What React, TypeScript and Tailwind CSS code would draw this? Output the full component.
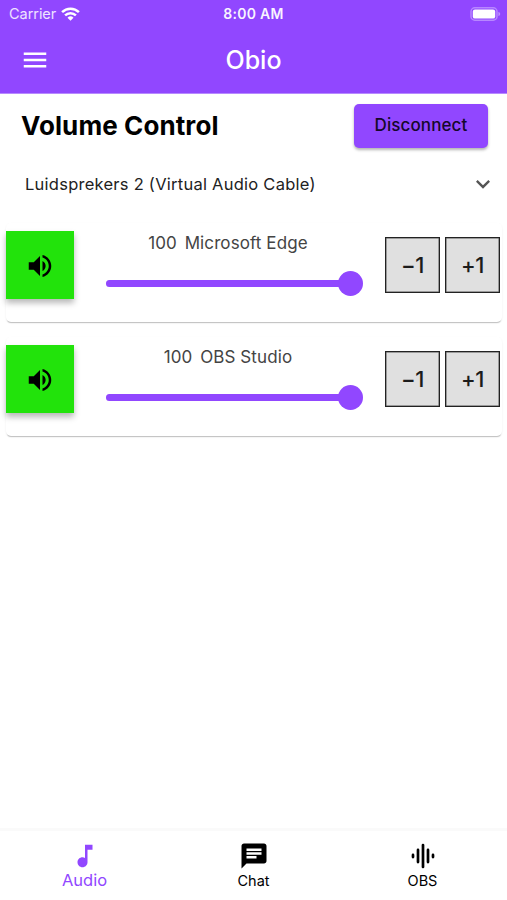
import { useState } from 'react'
import { MdChat, MdExpandMore, MdMenu, MdMusicNote, MdVolumeUp } from 'react-icons/md'

type Channel = {
  id: string
  name: string
  volume: number
}

const initialChannels: Channel[] = [
  { id: 'edge', name: 'Microsoft Edge', volume: 100 },
  { id: 'obs', name: 'OBS Studio', volume: 100 }
]

function StatusBar() {
  return (
    <div className="grid h-[27px] grid-cols-3 items-center pl-[9px] pr-[6px] text-white">
      <div className="flex items-center gap-[5px]">
        <span className="text-[14.5px] leading-4 tracking-[-0.05px] text-white/85">Carrier</span>
        <svg className="h-[14px] w-[19px]" viewBox="0 0 19 14" fill="none" stroke="currentColor" strokeWidth="2.5">
          <path d="M1.1 5.2a12 12 0 0 1 16.8 0" />
          <path d="M4.1 8.4a7.7 7.7 0 0 1 10.8 0" />
          <path d="M9.5 13.8 6.5 10.7a4.3 4.3 0 0 1 6 0z" fill="currentColor" stroke="none" />
        </svg>
      </div>
      <span className="-ml-[3px] text-center text-[14px] font-semibold leading-4 tracking-[0.3px] text-white/95">
        8:00 AM
      </span>
      <svg className="h-[14px] w-[31px] justify-self-end" viewBox="0 0 31 14" fill="none">
        <rect x="1" y="0.8" width="26" height="12.4" rx="3.8" stroke="white" strokeOpacity="0.35" strokeWidth="1.5" />
        <rect x="2.8" y="2.4" width="22.4" height="9.2" rx="2.2" fill="white" />
        <path d="M28.4 5v4c1.2-.4 1.8-1.1 1.8-2s-.6-1.6-1.8-2z" fill="white" fillOpacity="0.4" />
      </svg>
    </div>
  )
}

function EqualizerIcon() {
  return (
    <svg className="h-[30px] w-[30px]" viewBox="0 0 30 30" stroke="currentColor" strokeWidth="2.7" strokeLinecap="round">
      <path d="M5 13.9v2.2M10 8.9v12.2M15 4v22M20 8.9v12.2M25 13.9v2.2" />
    </svg>
  )
}

function ChannelRow({ channel, onStep }: { channel: Channel; onStep: (id: string, step: number) => void }) {
  const buttonClass =
    'h-14 w-[55px] border border-[#222] bg-[#e0e0e0] text-[22px] font-medium tracking-[-0.3px] text-[#1c1c1c] shadow-[inset_0_0_0_0.5px_#555]'

  return (
    <div className="flex h-[99px] rounded-[5px] bg-white pt-[8px] shadow-[0_2px_1px_-1px_rgba(0,0,0,0.2),0_1px_2px_rgba(0,0,0,0.08)]">
      <button
        type="button"
        className="flex h-[68px] w-[68px] items-center justify-center bg-[#22e30b] pt-px text-black shadow-[0_4px_6px_rgba(0,0,0,0.28)]"
      >
        <MdVolumeUp className="h-[30px] w-[30px]" />
      </button>

      <div className="ml-8 w-[244px]">
        <p className="flex justify-center gap-[8px] text-[17px] leading-6 text-[#444]">
          <span>{channel.volume}</span>
          <span className="tracking-[0.1px]">{channel.name}</span>
        </p>
        <div className="mt-4 flex h-6 items-center">
          <div className="flex h-[7px] w-full items-center rounded-full bg-[#dcc8ff]">
            <div
              className="flex h-[7px] items-center justify-end rounded-full bg-[#9147ff]"
              style={{ width: `${channel.volume}%` }}
            >
              <span className="-mr-[13px] h-[25px] w-[25px] shrink-0 rounded-full bg-[#9147ff]" />
            </div>
          </div>
        </div>
      </div>

      <div className="ml-[35px] mt-[6px] flex shrink-0 gap-[5px]">
        <button type="button" className={buttonClass} onClick={() => onStep(channel.id, -1)}>
          −1
        </button>
        <button type="button" className={buttonClass} onClick={() => onStep(channel.id, 1)}>
          +1
        </button>
      </div>
    </div>
  )
}

export default function App() {
  const [channels, setChannels] = useState(initialChannels)

  const handleStep = (id: string, step: number) => {
    setChannels(
      channels.map((channel) =>
        channel.id === id
          ? { ...channel, volume: Math.min(100, Math.max(0, channel.volume + step)) }
          : channel
      )
    )
  }

  return (
    <div className="flex h-screen w-full flex-col overflow-hidden bg-white font-['Inter',sans-serif]">
      <header className="h-[94px] shrink-0 border-b border-[#b78aff] bg-[#9147ff]">
        <StatusBar />
        <div className="grid h-[66px] grid-cols-3 items-center px-5 text-white">
          <button type="button">
            <MdMenu className="h-[30px] w-[30px]" />
          </button>
          <h1 className="text-center text-[25px] font-medium leading-none">Obio</h1>
        </div>
      </header>

      <main className="flex-1">
        <div className="flex h-[63px] items-center justify-between pl-[21px] pr-[19px]">
          <h2 className="text-[26px] font-bold tracking-[0.1px] text-black">Volume Control</h2>
          <button
            type="button"
            className="mt-px h-[44px] w-[134px] rounded-[5px] bg-[#9147ff] text-[17px] font-medium tracking-[0.1px] text-[#15082a] shadow-[0_2px_3px_rgba(0,0,0,0.3)]"
          >
            Disconnect
          </button>
        </div>

        <button type="button" className="mt-px flex h-[52px] w-full items-center justify-between pl-[25px] pr-[10px]">
          <span className="text-[16.5px] tracking-[0.25px] text-[#222]">Luidsprekers 2 (Virtual Audio Cable)</span>
          <MdExpandMore className="h-7 w-7 text-[#555]" />
        </button>

        <div className="mt-[13px] flex flex-col gap-[15px] pl-[6px] pr-[5px]">
          {channels.map((channel) => (
            <ChannelRow key={channel.id} channel={channel} onStep={handleStep} />
          ))}
        </div>
      </main>

      <nav className="grid h-[72px] shrink-0 grid-cols-3 border-t-[3px] border-[#fafafa] bg-white">
        <button type="button" className="flex flex-col items-center pt-[10px] text-[#9147ff]">
          <MdMusicNote className="h-[30px] w-[30px]" />
          <span className="-mt-px text-[16.5px] leading-5">Audio</span>
        </button>
        <button type="button" className="flex flex-col items-center pt-[10px] text-black">
          <MdChat className="h-[30px] w-[30px]" />
          <span className="text-[14.5px] leading-5">Chat</span>
        </button>
        <button type="button" className="flex flex-col items-center pt-[10px] text-black">
          <EqualizerIcon />
          <span className="text-[14.5px] leading-5">OBS</span>
        </button>
      </nav>
    </div>
  )
}
